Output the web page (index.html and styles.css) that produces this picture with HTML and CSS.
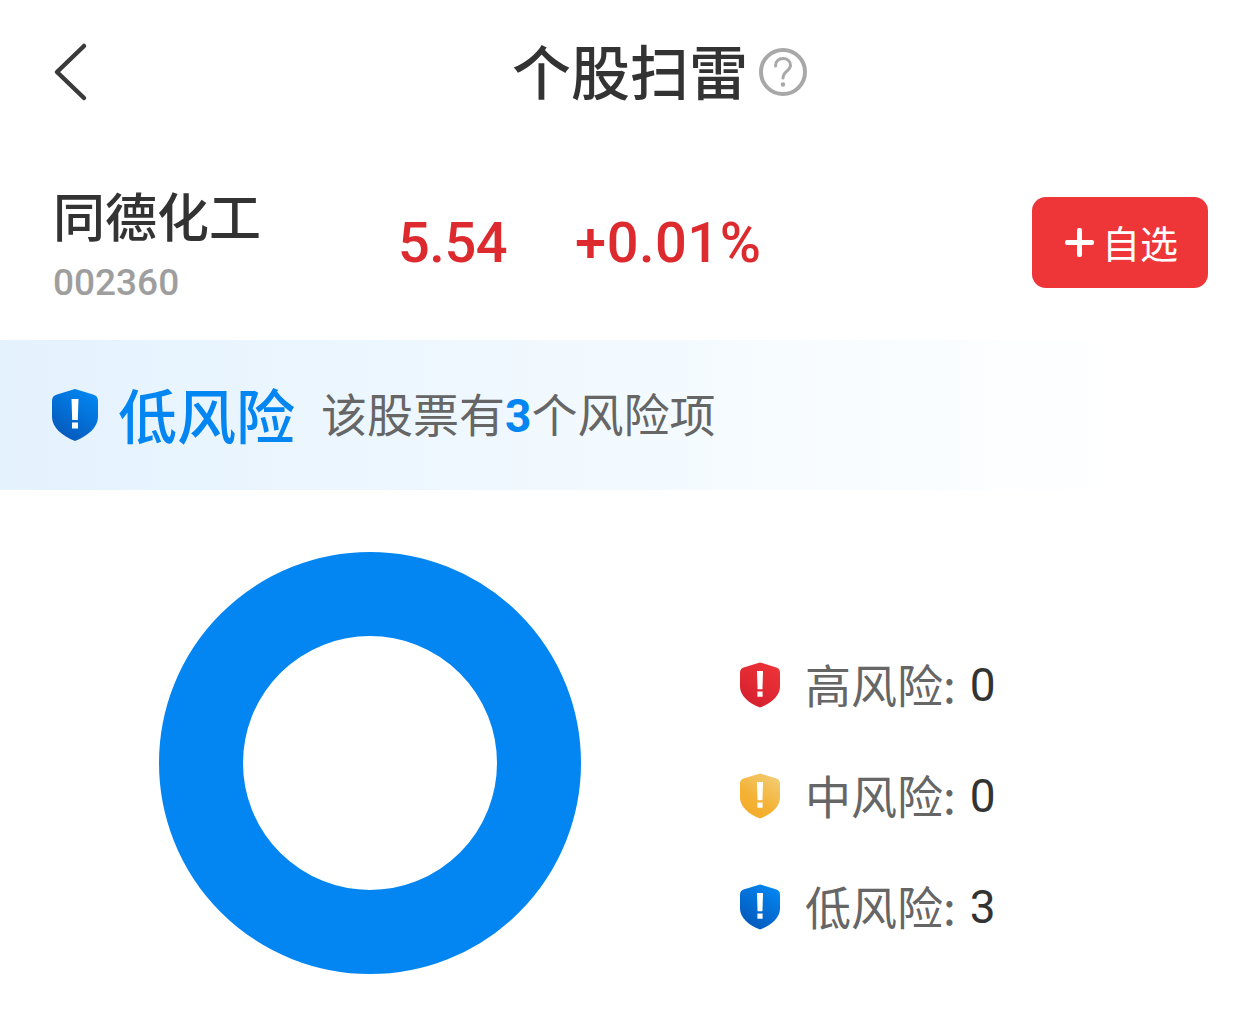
FILE: index.html
```html
<!DOCTYPE html>
<html lang="zh-CN">
<head>
    <meta charset="UTF-8">
    <meta name="viewport" content="width=device-width, initial-scale=1.0">
    <title>个股扫雷</title>
    <link rel="stylesheet" href="styles.css">
</head>
<body>
    <svg class="defs" width="0" height="0">
        <defs>
            <linearGradient id="grad-high" x1="0.8" y1="0" x2="0.2" y2="1">
                <stop offset="0" stop-color="#ee3338"/>
                <stop offset="1" stop-color="#d3202e"/>
            </linearGradient>
            <linearGradient id="grad-mid" x1="0.8" y1="0" x2="0.2" y2="1">
                <stop offset="0" stop-color="#f2cc74"/>
                <stop offset="0.6" stop-color="#f4b235"/>
                <stop offset="1" stop-color="#f4ab28"/>
            </linearGradient>
            <linearGradient id="grad-low" x1="0.8" y1="0" x2="0.2" y2="1">
                <stop offset="0" stop-color="#0287f2"/>
                <stop offset="1" stop-color="#0556b8"/>
            </linearGradient>
            <path id="shield" d="M23 0 L41 5.5 C44.5 6.5 46 8.5 46 12 L46 28 C46 38 36 47 23 52 C10 47 0 38 0 28 L0 12 C0 8.5 1.5 6.5 5 5.5 Z"/>
            <g id="bang">
                <path d="M19.5 10 L26.5 10 L25.8 31 L20.2 31 Z" fill="#fff"/>
                <rect x="20" y="33.5" width="6" height="6" fill="#fff"/>
            </g>
        </defs>
    </svg>

    <div class="header">
        <div class="back">
            <svg width="36" height="60" viewBox="0 0 36 60">
                <path d="M32 4 L5 30 L32 56" fill="none" stroke="#3a3a3a" stroke-width="4.5" stroke-linecap="round" stroke-linejoin="round"/>
            </svg>
        </div>
        <h1>个股扫雷</h1>
        <div class="help">
            <svg width="48" height="48" viewBox="0 0 48 48">
                <circle cx="24" cy="24" r="22" fill="none" stroke="#a8a8a8" stroke-width="4"/>
                <path d="M16.5 18 C16.5 13 20 10.5 24 10.5 C28.5 10.5 31.5 13.5 31.5 17.5 C31.5 22.5 24 23.5 24 30" fill="none" stroke="#a8a8a8" stroke-width="3" stroke-linecap="round"/>
                <circle cx="24" cy="36.5" r="2.2" fill="#a8a8a8"/>
            </svg>
        </div>
    </div>

    <div class="stock">
        <div class="stock-name">
            <div class="name">同德化工</div>
            <div class="code">002360</div>
        </div>
        <div class="price">5.54</div>
        <div class="change">+0.01%</div>
        <div class="add-btn"><span class="plus"></span>自选</div>
    </div>

    <div class="banner">
        <svg class="banner-icon" width="46" height="52" viewBox="0 0 46 52">
            <use href="#shield" fill="url(#grad-low)"/>
            <use href="#bang"/>
        </svg>
        <span class="level">低风险</span>
        <span class="summary">该股票有<b>3</b>个风险项</span>
    </div>

    <div class="chart-section">
        <div class="donut"></div>
        <ul class="legend">
            <li>
                <svg width="40" height="46" viewBox="0 0 46 52">
                    <use href="#shield" fill="url(#grad-high)"/>
                    <use href="#bang"/>
                </svg>
                <span class="label">高风险:</span><span class="count">0</span>
            </li>
            <li>
                <svg width="40" height="46" viewBox="0 0 46 52">
                    <use href="#shield" fill="url(#grad-mid)"/>
                    <use href="#bang"/>
                </svg>
                <span class="label">中风险:</span><span class="count">0</span>
            </li>
            <li>
                <svg width="40" height="46" viewBox="0 0 46 52">
                    <use href="#shield" fill="url(#grad-low)"/>
                    <use href="#bang"/>
                </svg>
                <span class="label">低风险:</span><span class="count">3</span>
            </li>
        </ul>
    </div>
</body>
</html>
```

FILE: styles.css
```css
body {
    margin: 0;
    background: #fff;
    font-family: "Noto Sans CJK SC", "Noto Sans", sans-serif;
    color: #333;
}

.defs {
    display: block;
    height: 0;
}

/* top bar */
.header {
    display: grid;
    grid-template-columns: 1fr auto 1fr;
    align-items: center;
    height: 139px;
    padding: 0 52px 6px;
}

.back {
    display: flex;
    align-items: center;
    margin-top: 4px;
}

.header h1 {
    margin: 0;
    font-size: 59px;
    font-weight: 500;
    line-height: 64px;
    color: #333;
}

.help {
    display: flex;
    align-items: center;
    margin-left: 11px;
    margin-top: 4px;
}

/* stock row */
.stock {
    display: flex;
    align-items: center;
    height: 195px;
    padding: 0 52px 0 53px;
    font-family: Roboto, "Noto Sans CJK SC", sans-serif;
}

.stock-name {
    width: 345px;
    padding-top: 4px;
}

.name {
    font-family: "Noto Sans CJK SC", sans-serif;
    font-size: 52px;
    font-weight: 500;
    line-height: 60px;
    color: #333;
}

.code {
    margin-top: 16px;
    font-size: 37px;
    font-weight: 500;
    line-height: 44px;
    color: #9e9e9e;
}

.price,
.change {
    font-size: 56px;
    font-weight: 500;
    color: #dc2a2e;
}

.price {
    letter-spacing: -0.5px;
}

.change {
    margin-left: 68px;
    letter-spacing: 0.5px;
}

.add-btn {
    display: flex;
    align-items: center;
    width: 176px;
    height: 91px;
    margin-left: auto;
    padding: 0 0 3px 33px;
    box-sizing: border-box;
    border-radius: 14px;
    background: #ee3639;
    color: #fff;
    font-family: "Noto Sans CJK SC", sans-serif;
    font-size: 38px;
}

.plus {
    position: relative;
    width: 29px;
    height: 29px;
    margin: 3px 8px 0 0;
}

.plus::before,
.plus::after {
    content: "";
    position: absolute;
    background: #fff;
    border-radius: 2px;
}

.plus::before {
    left: 0;
    right: 0;
    top: 12px;
    height: 5px;
}

.plus::after {
    top: 0;
    bottom: 0;
    left: 12px;
    width: 5px;
}

/* risk banner */
.banner {
    display: flex;
    align-items: center;
    height: 150px;
    padding-left: 52px;
    background: linear-gradient(to right, #e4f2fe, #f5fbff 58%, #fff 90%);
}

.banner-icon {
    flex: none;
}

.level {
    margin: -3px 0 0 20px;
    font-size: 59px;
    font-weight: 500;
    color: #0385f2;
}

.summary {
    margin: -6px 0 0 26px;
    font-size: 46px;
    color: #666;
}

.summary b {
    font-family: Roboto, sans-serif;
    font-weight: 700;
    color: #0385f2;
}

/* chart and legend */
.chart-section {
    display: flex;
    align-items: center;
    padding: 62px 0 0 159px;
}

.donut {
    box-sizing: border-box;
    width: 422px;
    height: 422px;
    border: 84px solid #0385f2;
    border-radius: 50%;
}

.legend {
    display: flex;
    flex-direction: column;
    gap: 51px;
    margin: 66px 0 0 159px;
    padding: 0;
    list-style: none;
}

.legend li {
    display: flex;
    align-items: center;
    height: 60px;
    font-size: 46px;
}

.legend .label {
    margin: -4px 0 0 25px;
    color: #666;
}

.legend .count {
    margin-left: 14px;
    font-family: Roboto, sans-serif;
    color: #333;
}
```
